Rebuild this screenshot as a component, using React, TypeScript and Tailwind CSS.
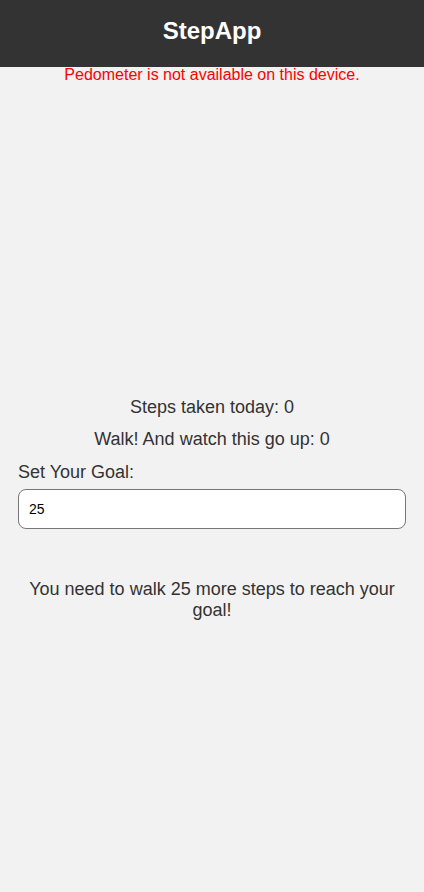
export default function App() {
  const steps = 0;
  const live = 0;
  const goal = 25;

  return (
    <div className="min-h-[892px] bg-[#f2f2f2] font-['Liberation_Sans',Arial,sans-serif] text-[#333]">
      <header className="flex h-[67px] items-center justify-center bg-[#333] pb-[6px]">
        <h1 className="text-[24px] font-bold text-white">StepApp</h1>
      </header>
      <p className="mt-[-1px] text-center text-[16px] leading-[18px] text-[#ff0000]">
        Pedometer is not available on this device.
      </p>

      <div className="h-[313px]" />

      <div className="px-[18px]">
        <p className="text-center text-[18px] leading-[21px]">Steps taken today: {steps}</p>
        <p className="mt-[11px] text-center text-[18px] leading-[21px]">
          Walk! And watch this go up: {live}
        </p>
        <label className="mt-[12px] block text-[18px] leading-[21px]">Set Your Goal:</label>
        <input
          type="number"
          defaultValue={goal}
          className="mt-[6px] block h-[40px] w-full rounded-[8px] border border-[#777] bg-white px-[10px] text-[14px] text-black outline-none"
        />
        <p className="mx-auto mt-[50px] max-w-[380px] text-center text-[18px] leading-[21px]">
          You need to walk {goal - steps} more steps to reach your goal!
        </p>
      </div>
    </div>
  );
}
